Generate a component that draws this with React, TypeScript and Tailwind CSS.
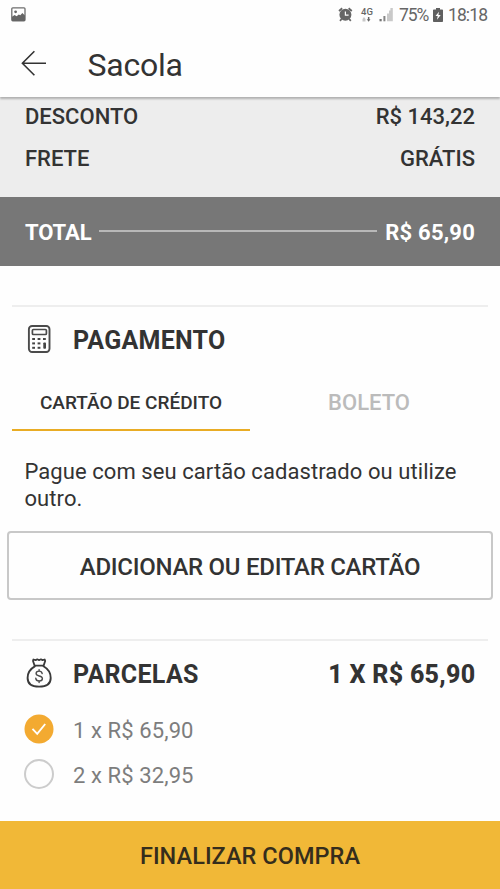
import React from "react";

function PictureIcon() {
  return (
    <svg width="15" height="15" viewBox="0 0 15 15">
      <rect x="0.8" y="0.8" width="13.2" height="13" rx="1" fill="#fff" stroke="#6e6e6e" strokeWidth="1.3" />
      <path d="M1 9.8 3.6 8l2 1.2 2.2-1.7 1.5.8 2-2.3L14 8.5V14H1z" fill="#666" />
      <circle cx="4.6" cy="4.8" r="1.4" fill="#666" />
    </svg>
  );
}

function AlarmIcon() {
  return (
    <svg width="15" height="15" viewBox="0 0 15 15" fill="none">
      <circle cx="7.4" cy="7.8" r="6" fill="#666" />
      <path d="M1 4 4.2 1.2M10.6 1.2 13.8 4M3.6 12 2 13.8M11.2 12l1.6 1.8" stroke="#666" strokeWidth="1.8" />
      <path d="M7.4 4.6v3.6h3.2" stroke="#fff" strokeWidth="1.2" />
    </svg>
  );
}

function SignalIcon() {
  return (
    <svg width="15" height="15" viewBox="0 0 15 15">
      <rect x="0.5" y="12" width="2.2" height="2.3" fill="#757575" />
      <rect x="4.4" y="9" width="2" height="5.3" fill="#858585" />
      <path d="M8 14.3V6.5h2V3.5h1.4V1h2.4v13.3z" fill="#c9c9c9" />
    </svg>
  );
}

function BatteryIcon() {
  return (
    <svg width="10" height="14" viewBox="0 0 10 14">
      <path d="M3 0h4v1.5h2.2q.8 0 .8.8v10.9q0 .8-.8.8H.8q-.8 0-.8-.8V2.3q0-.8.8-.8H3z" fill="#606060" />
      <path d="M6 3.7 2.5 8h2.2L4 11.8 7.7 7H5.4z" fill="#fff" />
    </svg>
  );
}

function CalculatorIcon() {
  return (
    <svg width="28" height="30" viewBox="0 0 28 30" fill="none">
      <rect x="4.9" y="1" width="20.6" height="26" rx="3.2" stroke="#4b4b4b" strokeWidth="1.9" />
      <rect x="8.4" y="4.5" width="14" height="5" rx="1" stroke="#4b4b4b" strokeWidth="1.7" />
      <g fill="#444">
        <rect x="8.2" y="13" width="2.8" height="2" />
        <rect x="13.6" y="13" width="2.8" height="2" />
        <rect x="19" y="13" width="2.8" height="2" />
        <rect x="8.2" y="17.4" width="2.8" height="2" />
        <rect x="13.6" y="17.4" width="2.8" height="2" />
        <rect x="8.2" y="21.8" width="2.8" height="2" />
        <rect x="13.6" y="21.8" width="2.8" height="2" />
        <rect x="19.3" y="17.4" width="2.7" height="6.4" rx="0.8" />
      </g>
    </svg>
  );
}

function MoneyBagIcon() {
  return (
    <svg width="28" height="32" viewBox="0 0 28 32" fill="none" stroke="#3a3a3a" strokeLinecap="round" strokeLinejoin="round">
      <path
        d="M10.8 8.3C6 11 3.6 15.5 3.6 19.9c0 6.1 4 8.7 11.5 8.7s11.6-2.6 11.6-8.7c0-4.4-2.5-8.9-7.2-11.6"
        strokeWidth="1.9"
      />
      <path d="M10.6 7.6 9 3 9.4 1.5l2.3.6 1.6-.8 1.8.9 1.8-.9 1.6.8 2.2-.6.5 1.5-1.6 4.6z" strokeWidth="1.8" />
      <path
        d="M18.2 15.6c-.3-1.6-1.4-2.5-3.1-2.5-1.8 0-3 1-3 2.4 0 3.4 6.3 1.5 6.3 5 0 1.6-1.3 2.5-3.2 2.5-2 0-3.2-1-3.4-2.7M15.1 11.6v1.5M15.1 23v1.6"
        stroke="#4c4c4c"
        strokeWidth="1.4"
      />
    </svg>
  );
}

export default function App() {
  return (
    <div className="flex h-[889px] w-[500px] flex-col overflow-hidden bg-[#fefefe] text-[#333] font-[Roboto,sans-serif]">
      <div className="flex h-[29px] shrink-0 items-center justify-between pl-[11px] pr-[12px] text-[#666]">
        <PictureIcon />
        <div className="flex items-center">
          <AlarmIcon />
          <div className="ml-[8px] flex w-[14px] flex-col items-start pb-px">
            <span className="text-[9.5px] leading-[9px] font-medium">4G</span>
            <svg width="11" height="5" viewBox="0 0 11 5" className="mt-px">
              <path d="M1.5 2 3 0l1.5 2v2.5h-3z" fill="#c8c8c8" />
              <path d="M5.8 2.2h1.1V0h1.5v2.2h1.1L7.6 4.8z" fill="#666" />
            </svg>
          </div>
          <div className="ml-[4px]">
            <SignalIcon />
          </div>
          <span className="ml-[5px] w-[30px] pt-px text-[17.5px] leading-[29px] tracking-[-1.1px]">75%</span>
          <div className="ml-[4px]">
            <BatteryIcon />
          </div>
          <span className="ml-[5px] w-[40px] pt-px text-[17.5px] leading-[29px] tracking-[-0.9px]">18:18</span>
        </div>
      </div>

      <header className="z-10 flex h-[68px] shrink-0 items-center bg-[#fefefe] pl-[21px] shadow-[0_2px_2px_0px_rgba(0,0,0,0.26)]">
        <svg width="26" height="27" viewBox="0 0 26 27" fill="none" stroke="#333" strokeWidth="1.6">
          <path d="M25 13.3H1.4M13.4 1.2 1.4 13.3l12 12" />
        </svg>
        <h1 className="ml-[40.5px] pt-[3px] text-[32px] leading-[38px] tracking-[-0.25px]">Sacola</h1>
      </header>

      <section className="flex h-[100px] shrink-0 flex-col bg-[#ededed] px-[25px] text-[22px] leading-[42px] font-medium">
        <div className="-mt-px flex justify-between">
          <span>DESCONTO</span>
          <span>R$ 143,22</span>
        </div>
        <div className="flex justify-between">
          <span>FRETE</span>
          <span>GRÁTIS</span>
        </div>
      </section>

      <section className="flex h-[69px] shrink-0 items-center bg-[#777] px-[25px] pt-[2px] text-[22px] font-bold text-white">
        <span className="tracking-[-0.1px]">TOTAL</span>
        <span className="mx-[8px] mb-[3px] h-[2px] flex-1 bg-[#b8b8b8]" />
        <span className="tracking-[0.2px]">R$ 65,90</span>
      </section>

      <section className="mx-[12px] mt-[39px] flex h-[334px] shrink-0 flex-col border-t-2 border-[#eee]">
        <div className="flex h-[66px] items-center pl-[12px]">
          <CalculatorIcon />
          <h2 className="ml-[21px] pt-[2px] text-[25px] leading-[30px] font-bold tracking-[0.25px]">PAGAMENTO</h2>
        </div>
        <div className="flex h-[58px] text-center">
          <button className="w-[238px] border-b-2 border-[#e9ac24] pt-[4px] text-[19px] font-medium">CARTÃO DE CRÉDITO</button>
          <button className="w-[238px] pt-[1px] text-[22px] font-medium text-[#bbb]">BOLETO</button>
        </div>
        <p className="mt-[27px] pl-[12.5px] text-[22px] leading-[27px] tracking-[0.07px] whitespace-nowrap">
          Pague com seu cartão cadastrado ou utilize
          <br />
          outro.
        </p>
        <button className="mx-[-5px] mt-[19px] h-[69px] shrink-0 rounded-[4px] border-2 border-[#c8c8c8] pt-[2px] text-[24px] font-medium tracking-[-0.28px]">
          ADICIONAR OU EDITAR CARTÃO
        </button>
      </section>

      <section className="mx-[12px] flex h-[182px] shrink-0 flex-col border-t-2 border-[#eee]">
        <div className="flex h-[66px] items-center pl-[12px]">
          <MoneyBagIcon />
          <h2 className="ml-[21px] pt-[2px] text-[25px] leading-[30px] font-bold tracking-[0.3px]">PARCELAS</h2>
          <span className="mr-[12.5px] ml-auto pt-[2px] text-[25px] leading-[30px] font-extrabold tracking-[0.3px]">1 X R$ 65,90</span>
        </div>
        <div className="flex h-[45px] items-center pl-[12px] text-[22px] text-[#7d7d7d]">
          <svg width="30" height="30" viewBox="0 0 30 30" fill="none" className="-mt-px">
            <circle cx="15" cy="15" r="14.5" fill="#f3aa31" />
            <path d="m8.5 14.8 4.7 5 8-9.8" stroke="#fff" strokeWidth="1.9" />
          </svg>
          <span className="ml-[19px] pt-px tracking-[0.1px]">1 x R$ 65,90</span>
        </div>
        <div className="flex h-[45px] items-center pl-[12px] text-[22px] text-[#7d7d7d]">
          <span className="-mt-px size-[30px] rounded-full border-2 border-[#ccc]" />
          <span className="ml-[19px] pt-px tracking-[0.1px]">2 x R$ 32,95</span>
        </div>
      </section>

      <button className="h-[68px] shrink-0 bg-[#f1b837] pt-[3px] text-[23.5px] font-medium tracking-[0.05px] text-[#352d1c]">FINALIZAR COMPRA</button>
    </div>
  );
}
